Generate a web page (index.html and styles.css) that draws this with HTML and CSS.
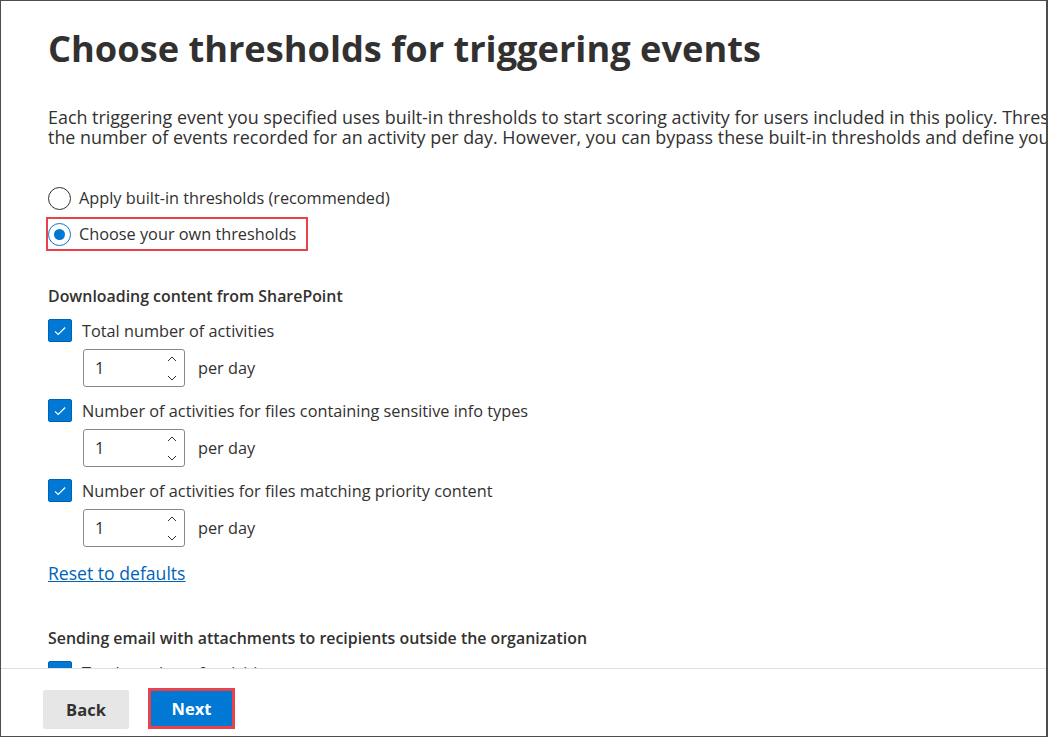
FILE: index.html
```html
<!DOCTYPE html>
<html lang="en">
<head>
<meta charset="utf-8">
<title>Choose thresholds for triggering events</title>
<link rel="stylesheet" href="styles.css">
</head>
<body>
<div class="frame">
  <main class="content">
    <h1 class="title">Choose thresholds for triggering events</h1>
    <p class="intro">Each triggering event you specified uses built-in thresholds to start scoring activity for users included in this policy. Thresholds are based on<br>the number of events recorded for an activity per day. However, you can bypass these built-in thresholds and define your own.</p>

    <div class="radios">
      <label class="radio-row">
        <span class="radio"></span>
        <span class="radio-label">Apply built-in thresholds (recommended)</span>
      </label>
      <label class="radio-row selected highlight">
        <span class="radio checked"></span>
        <span class="radio-label">Choose your own thresholds</span>
      </label>
    </div>

    <section class="group">
      <h2 class="group-title">Downloading content from SharePoint</h2>
      <div class="item">
        <div class="check-row"><span class="checkbox"><svg viewBox="0 0 16 16" width="16" height="16"><path d="M3 8.3l3.2 3.2L13.2 4.5" fill="none" stroke="#fff" stroke-width="1.2"/></svg></span><span class="check-label">Total number of activities</span></div>
        <div class="spin-row"><div class="spin"><span class="spin-value">1</span><span class="spin-arrows"><svg viewBox="0 0 10 6" width="10" height="6"><path d="M1 5l4-4 4 4" fill="none" stroke="#323130" stroke-width="1"/></svg><svg viewBox="0 0 10 6" width="10" height="6"><path d="M1 1l4 4 4-4" fill="none" stroke="#323130" stroke-width="1"/></svg></span></div><span class="unit">per day</span></div>
      </div>
      <div class="item">
        <div class="check-row"><span class="checkbox"><svg viewBox="0 0 16 16" width="16" height="16"><path d="M3 8.3l3.2 3.2L13.2 4.5" fill="none" stroke="#fff" stroke-width="1.2"/></svg></span><span class="check-label">Number of activities for files containing sensitive info types</span></div>
        <div class="spin-row"><div class="spin"><span class="spin-value">1</span><span class="spin-arrows"><svg viewBox="0 0 10 6" width="10" height="6"><path d="M1 5l4-4 4 4" fill="none" stroke="#323130" stroke-width="1"/></svg><svg viewBox="0 0 10 6" width="10" height="6"><path d="M1 1l4 4 4-4" fill="none" stroke="#323130" stroke-width="1"/></svg></span></div><span class="unit">per day</span></div>
      </div>
      <div class="item">
        <div class="check-row"><span class="checkbox"><svg viewBox="0 0 16 16" width="16" height="16"><path d="M3 8.3l3.2 3.2L13.2 4.5" fill="none" stroke="#fff" stroke-width="1.2"/></svg></span><span class="check-label">Number of activities for files matching priority content</span></div>
        <div class="spin-row"><div class="spin"><span class="spin-value">1</span><span class="spin-arrows"><svg viewBox="0 0 10 6" width="10" height="6"><path d="M1 5l4-4 4 4" fill="none" stroke="#323130" stroke-width="1"/></svg><svg viewBox="0 0 10 6" width="10" height="6"><path d="M1 1l4 4 4-4" fill="none" stroke="#323130" stroke-width="1"/></svg></span></div><span class="unit">per day</span></div>
      </div>
      <a class="reset" href="#">Reset to defaults</a>
    </section>

    <section class="group group-second">
      <h2 class="group-title">Sending email with attachments to recipients outside the organization</h2>
      <div class="item">
        <div class="check-row"><span class="checkbox"><svg viewBox="0 0 16 16" width="16" height="16"><path d="M3 8.3l3.2 3.2L13.2 4.5" fill="none" stroke="#fff" stroke-width="1.2"/></svg></span><span class="check-label">Total number of activities</span></div>
      </div>
    </section>
  </main>
  <footer class="footer">
    <button class="btn btn-back" type="button">Back</button>
    <button class="btn btn-next" type="button">Next</button>
  </footer>
</div>
</body>
</html>
```

FILE: styles.css
```css
* { box-sizing: border-box; }
html, body { margin: 0; padding: 0; background: #fff; }
body {
  font-family: "Open Sans", "Noto Sans", "Liberation Sans", sans-serif;
  color: #323130;
}
.frame {
  width: 1048px;
  height: 737px;
  border: 1px solid #4d4d4d;
  border-right-width: 2px;
  display: flex;
  flex-direction: column;
  overflow: hidden;
}
.content {
  flex: 1;
  overflow: hidden;
  padding: 27px 0 0 47px;
  min-height: 0;
}
.title {
  margin: 0;
  font-size: 36.2px;
  line-height: 40px;
  font-weight: 700;
  letter-spacing: 0;
  white-space: nowrap;
}
.intro {
  margin: 39px 0 0;
  font-size: 17.9px;
  line-height: 20px;
  white-space: nowrap;
}
.radios {
  margin-top: 36px;
  display: flex;
  flex-direction: column;
  align-items: flex-start;
  gap: 6px;
}
.radio-row {
  display: flex;
  align-items: center;
  height: 30px;
  gap: 8px;
  font-size: 16.3px;
  padding-right: 10px;
}
.highlight { outline: 2px solid #e8424a; }
.radio {
  width: 23px;
  height: 23px;
  border: 1px solid #323130;
  border-radius: 50%;
  display: flex;
  align-items: center;
  justify-content: center;
  flex: none;
}
.radio.checked { border-color: #0078d4; }
.radio.checked::after {
  content: "";
  width: 11px;
  height: 11px;
  border-radius: 50%;
  background: #0078d4;
}
.group-title {
  margin: 0;
  font-size: 15.9px;
  line-height: 22px;
  font-weight: 600;
  white-space: nowrap;
}
.group { margin-top: 36px; }
.group-second { margin-top: 42px; }
.item { margin-top: 12px; }
.check-row {
  display: flex;
  align-items: center;
  height: 23px;
  gap: 10px;
  font-size: 16.3px;
  white-space: nowrap;
}
.checkbox {
  width: 24px;
  height: 23px;
  background: #0078d4;
  border: 1px solid #0063b1;
  border-radius: 2px;
  display: flex;
  align-items: center;
  justify-content: center;
  flex: none;
}
.spin-row {
  margin: 7px 0 0 35px;
  display: flex;
  align-items: center;
  gap: 13px;
}
.spin {
  width: 102px;
  height: 38px;
  border: 1px solid #8a8886;
  border-radius: 3px;
  display: flex;
  align-items: center;
  justify-content: space-between;
  padding: 0 7px 0 11px;
  font-size: 16.3px;
}
.spin-arrows {
  display: flex;
  flex-direction: column;
  gap: 13px;
}
.spin-arrows svg { display: block; }
.unit { font-size: 16.3px; }
.reset {
  display: inline-block;
  margin-top: 15px;
  font-size: 17.6px;
  line-height: 22px;
  color: #0062b8;
  text-decoration: underline;
}
.footer {
  flex: none;
  height: 68px;
  border-top: 1px solid #e1dfdd;
  display: flex;
  align-items: flex-end;
  gap: 19px;
  padding: 0 0 7px 42px;
}
.btn {
  font-family: inherit;
  font-size: 16.5px;
  font-weight: 700;
  border-radius: 2px;
  cursor: pointer;
}
.btn-back {
  width: 86px;
  height: 39px;
  background: #e6e6e6;
  color: #323130;
  border: none;
}
.btn-next {
  width: 87px;
  height: 41px;
  background: #0078d4;
  color: #fff;
  border: 3px solid #e8424a;
  border-radius: 0;
}
```
